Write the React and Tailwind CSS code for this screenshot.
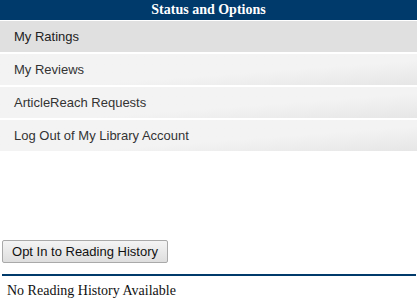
import React from 'react';

const items = ['My Ratings', 'My Reviews', 'ArticleReach Requests', 'Log Out of My Library Account'];

const App = () => {
  return (
    <div className="w-[417px] h-[302px] bg-white overflow-hidden">
      {/* Header */}
      <div className="h-[20px] bg-[#003a6b] text-white text-center font-bold text-[14px] leading-[20px] font-['Liberation_Serif',serif]">
        Status and Options
      </div>

      {/* Menu */}
      <ul className="mt-[1px] flex flex-col gap-[2px] font-['Liberation_Sans',Arial,sans-serif] text-[13px] text-[#333]">
        {items.map((item, index) => (
          <li
            key={item}
            className={`h-[31px] flex items-center pl-[14px] ${
              index === 0
                ? 'bg-[#e0e0e0] text-[#222]'
                : 'bg-gradient-to-br from-[#f3f3f3] from-60% to-[#e6e6e6]'
            }`}
          >
            {item}
          </li>
        ))}
      </ul>

      {/* Reading history */}
      <div className="mt-[87px] pl-[2px]">
        <button className="w-[166px] h-[23px] border border-[#a9a9a9] rounded-[2px] bg-gradient-to-b from-[#f4f4f4] to-[#dedede] text-[13px] text-[#111] font-['Liberation_Sans',Arial,sans-serif]">
          Opt In to Reading History
        </button>
      </div>
      <div className="mt-[11px] ml-[2px] mr-[1px] h-[2px] bg-[#003a6b]"></div>
      <div className="pl-[7px] pt-[4px] text-[14px] text-[#111] font-['Liberation_Serif',serif]">
        No Reading History Available
      </div>
    </div>
  );
};

export default App;
